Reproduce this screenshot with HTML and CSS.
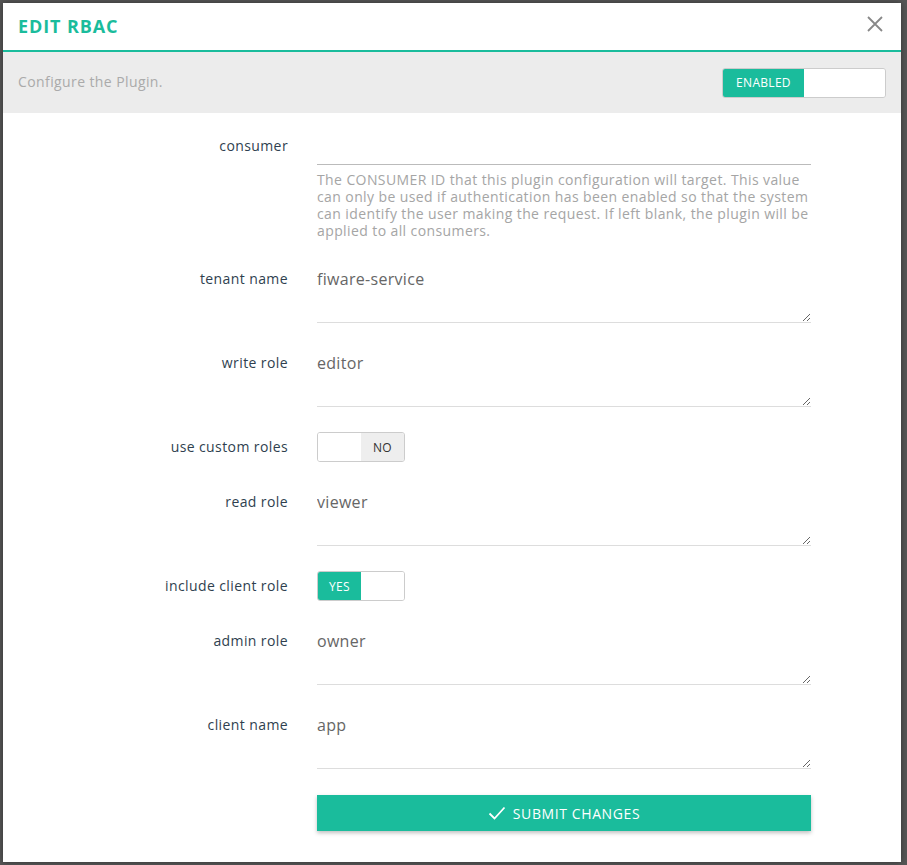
FILE: index.html
```html
<!DOCTYPE html>
<html>
<head>
    <link rel="stylesheet" href="styles.css">
</head>
<body>
<div class="modal">
    <div class="modal-header">
        <h3>EDIT RBAC</h3>
        <button type="button" class="close-btn">
            <svg width="16" height="16" viewBox="0 0 16 16">
                <path d="M1 1 L15 15 M15 1 L1 15" stroke="#888" stroke-width="1.8" fill="none"/>
            </svg>
        </button>
    </div>

    <div class="modal-sub">
        <span class="sub-text">Configure the Plugin.</span>
        <div class="switch switch-wide">
            <span class="switch-on">ENABLED</span>
            <span class="switch-blank"></span>
        </div>
    </div>

    <form class="modal-body">
        <div class="form-group">
            <label>consumer</label>
            <div class="field">
                <input type="text" class="line-input">
                <p class="help">The CONSUMER ID that this plugin configuration will target. This value can only be used if authentication has been enabled so that the system can identify the user making the request. If left blank, the plugin will be applied to all consumers.</p>
            </div>
        </div>

        <div class="form-group">
            <label>tenant name</label>
            <div class="field"><textarea>fiware-service</textarea></div>
        </div>

        <div class="form-group">
            <label>write role</label>
            <div class="field"><textarea>editor</textarea></div>
        </div>

        <div class="form-group toggle-group">
            <label>use custom roles</label>
            <div class="field">
                <div class="switch">
                    <span class="switch-blank"></span>
                    <span class="switch-off">NO</span>
                </div>
            </div>
        </div>

        <div class="form-group">
            <label>read role</label>
            <div class="field"><textarea>viewer</textarea></div>
        </div>

        <div class="form-group toggle-group">
            <label>include client role</label>
            <div class="field">
                <div class="switch">
                    <span class="switch-on">YES</span>
                    <span class="switch-blank"></span>
                </div>
            </div>
        </div>

        <div class="form-group">
            <label>admin role</label>
            <div class="field"><textarea>owner</textarea></div>
        </div>

        <div class="form-group">
            <label>client name</label>
            <div class="field"><textarea>app</textarea></div>
        </div>

        <div class="form-group submit-row">
            <span></span>
            <div class="field">
                <button type="button" class="submit-btn">
                    <svg width="18" height="14" viewBox="0 0 18 14">
                        <path d="M1.5 7.5 L6.5 12.5 L16.5 1.5" stroke="#fff" stroke-width="1.8" fill="none"/>
                    </svg>
                    SUBMIT CHANGES
                </button>
            </div>
        </div>
    </form>
</div>
</body>
</html>
```

FILE: styles.css
```css
*{
    margin: 0;
    padding: 0;
    box-sizing: border-box;
}
body {
    width: 100%;
    height: 100vh;
    font-family: "Open Sans", Arial, sans-serif;
    background-color: #565656;
    padding: 3px 0 0 3px;
}

.modal {
    width: 898px;
    height: 859px;
    background: #fff;
    box-shadow: 0 0 6px rgba(0, 0, 0, 0.4);
}

.modal-header {
    height: 49px;
    border-bottom: 2px solid #1abc9c;
    display: flex;
    align-items: center;
    justify-content: space-between;
    padding: 0 18px 0 15px;
}

.modal-header h3 {
    color: #1abc9c;
    font-size: 18px;
    font-weight: 700;
    letter-spacing: 0.9px;
    margin-top: -2px;
}

.close-btn {
    background: none;
    border: none;
    display: flex;
    margin-top: -6px;
}

.modal-sub {
    height: 61px;
    background: #ececec;
    display: flex;
    align-items: center;
    justify-content: space-between;
    padding: 0 15px 0 15px;
}

.sub-text {
    color: #aaa;
    font-size: 14px;
    letter-spacing: 0.4px;
    margin-top: -2px;
}

.switch {
    display: flex;
    width: 88px;
    height: 30px;
    border: 1px solid #ccc;
    border-radius: 3px;
    overflow: hidden;
    font-size: 12px;
    letter-spacing: 0.3px;
}

.switch span {
    flex: 1;
    display: flex;
    align-items: center;
    justify-content: center;
}

.switch-wide {
    width: 164px;
}

.switch-wide .switch-on {
    flex: 0 0 81px;
}

.switch-on {
    background: #1abc9c;
    color: #fff;
}

.switch-off {
    background: #eee;
    color: #333;
}

.switch-blank {
    background: #fff;
}

.modal-body {
    padding: 16px 15px 0 15px;
    display: flex;
    flex-direction: column;
    gap: 23px;
}

.form-group {
    display: grid;
    grid-template-columns: 270px 494px;
    column-gap: 29px;
}

.form-group label {
    text-align: right;
    color: #2f3f4f;
    font-size: 14px;
    letter-spacing: 0.4px;
    line-height: 20px;
    padding-top: 7px;
}

.line-input {
    width: 100%;
    height: 36px;
    border: none;
    border-bottom: 1px solid #bbb;
    outline: none;
    font-family: inherit;
    font-size: 16px;
}

.help {
    margin-top: 6px;
    color: #a5a5a5;
    font-size: 14px;
    letter-spacing: 0.4px;
    line-height: 17px;
}

textarea {
    width: 100%;
    height: 61px;
    border: none;
    border-bottom: 1px solid #ddd;
    outline: none;
    padding: 6px 0 0 0;
    font-family: inherit;
    font-size: 16px;
    letter-spacing: 0.3px;
    line-height: 22px;
    color: #666;
    display: block;
}

.toggle-group .field {
    padding-top: 2px;
    height: 32px;
}

.submit-row {
    margin-top: 3px;
}

.submit-btn {
    width: 100%;
    height: 36px;
    border: none;
    background: #1abc9c;
    color: #fff;
    font-family: inherit;
    font-size: 14px;
    letter-spacing: 0.6px;
    display: flex;
    align-items: center;
    justify-content: center;
    gap: 7px;
    box-shadow: 0 2px 4px rgba(0, 0, 0, 0.25);
}
```
